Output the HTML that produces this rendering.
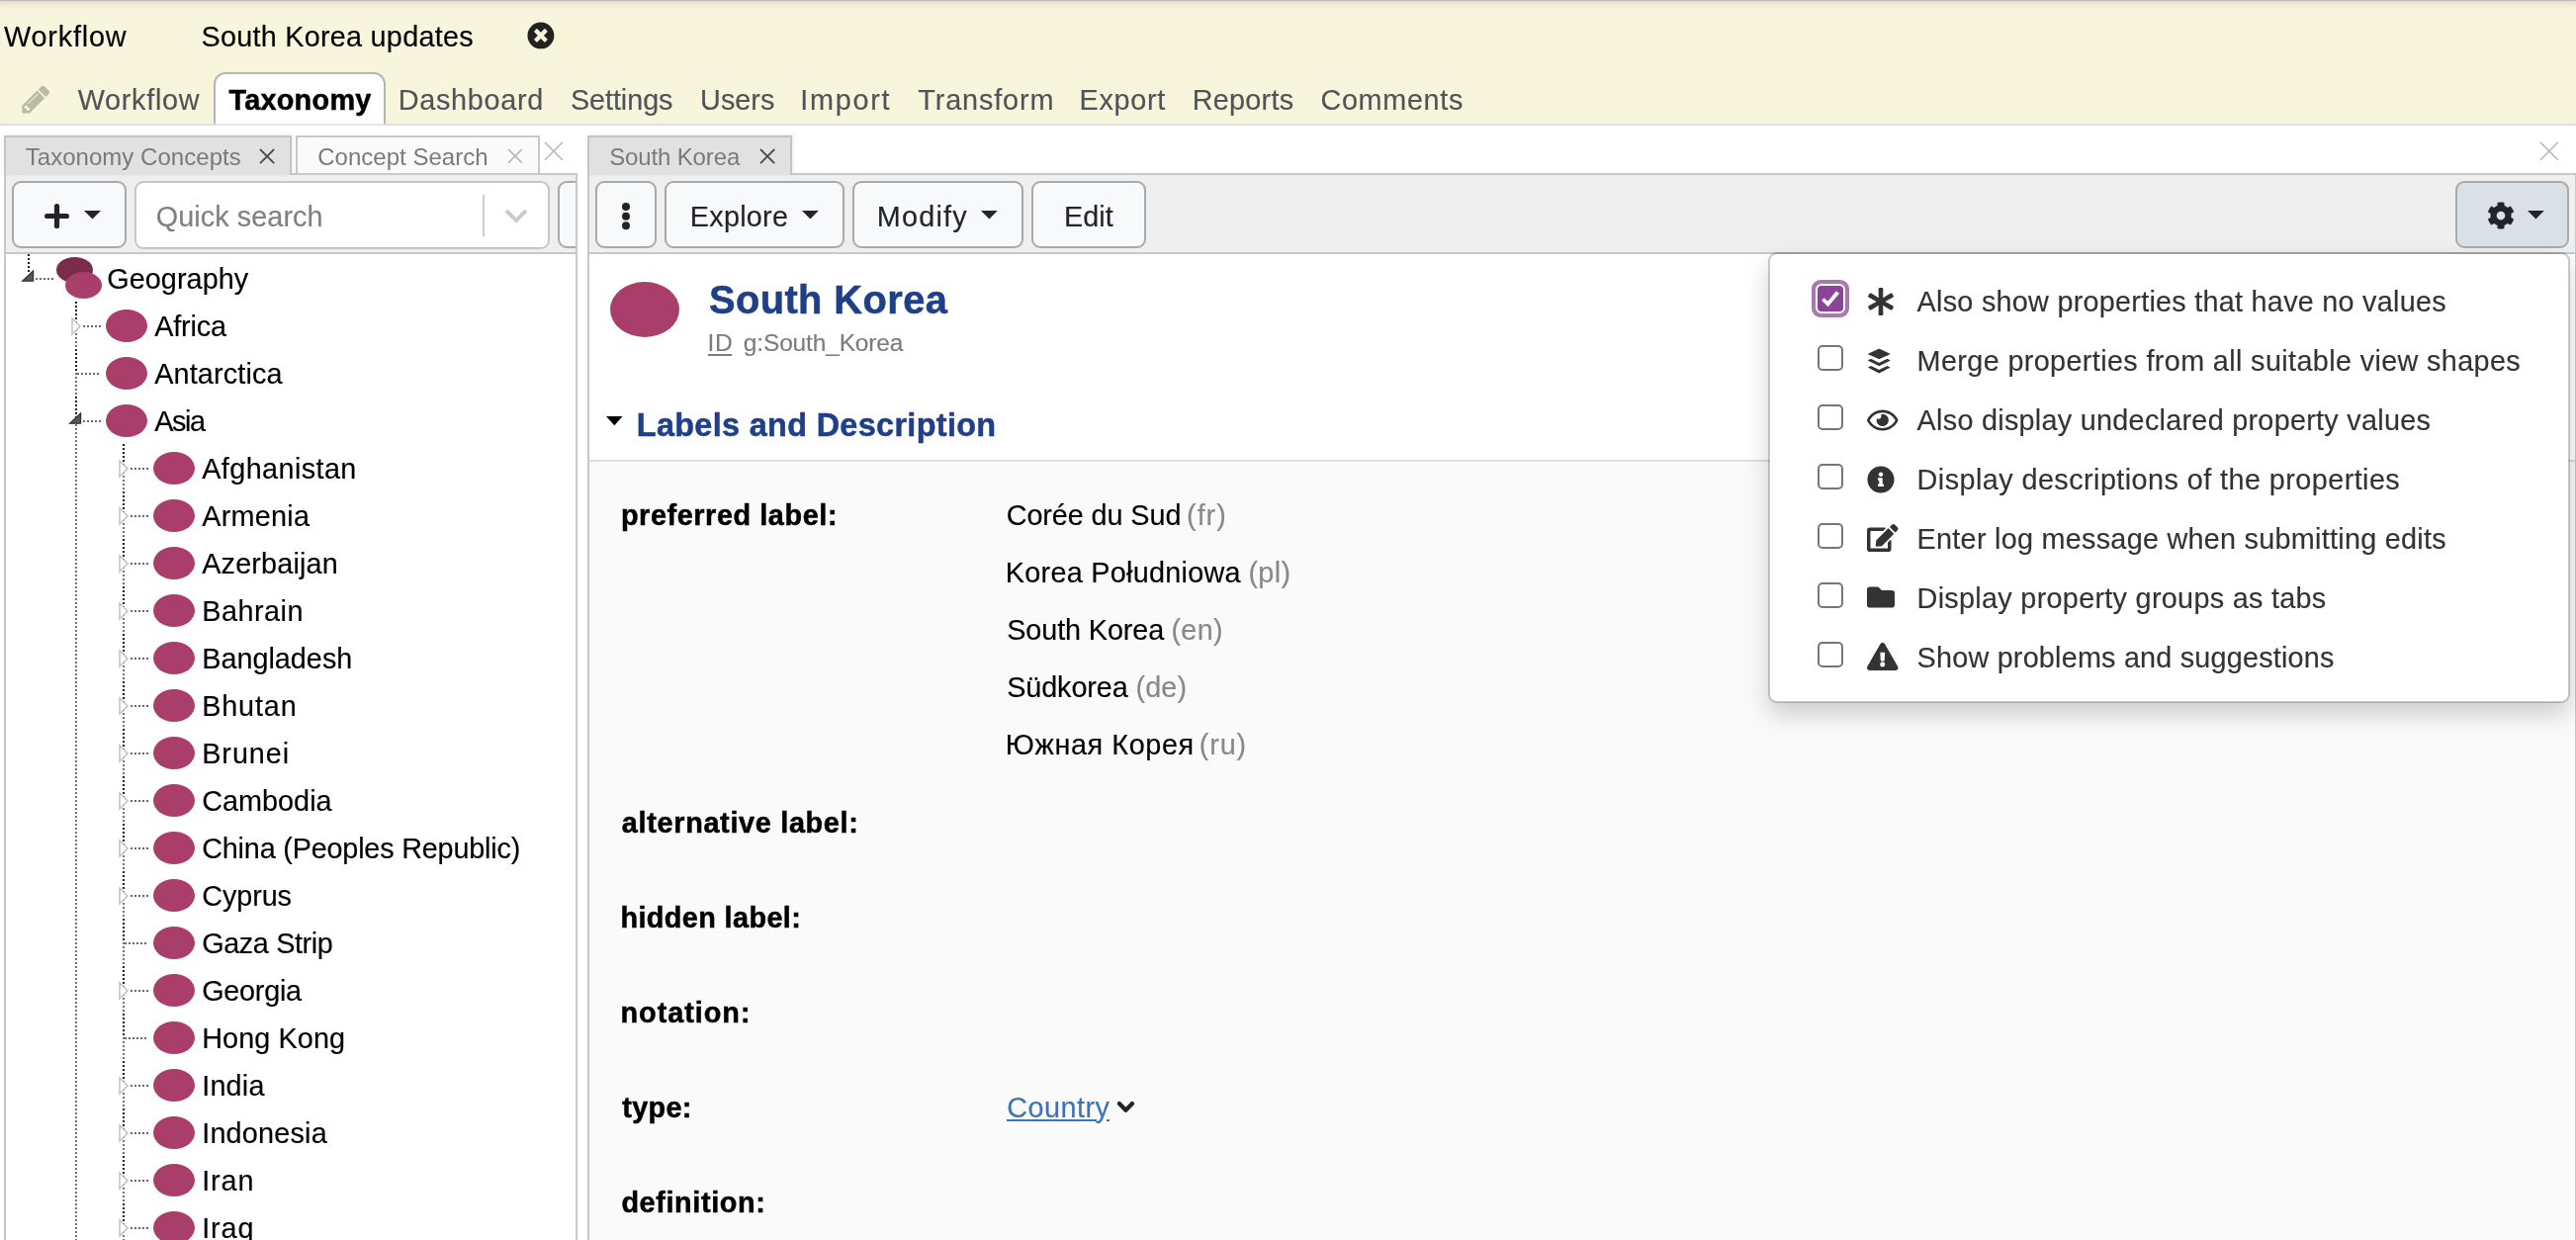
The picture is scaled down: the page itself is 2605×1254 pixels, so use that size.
<!DOCTYPE html>
<html><head><meta charset="utf-8"><title>South Korea</title>
<style>
html,body{margin:0;padding:0;}
body{width:2605px;height:1254px;overflow:hidden;position:relative;background:#fff;
 font-family:"Liberation Sans",sans-serif;}
.t{position:absolute;white-space:pre;}
.a{position:absolute;box-sizing:border-box;}
.btn{position:absolute;box-sizing:border-box;background:#f8f9fa;border:2px solid #a9a9a9;border-radius:9px;}
.el{position:absolute;border-radius:50%;background:#a93e6b;}
.vd{position:absolute;width:2px;background:repeating-linear-gradient(to bottom,#757575 0,#757575 2px,transparent 2px,transparent 4px);}
.vk{position:absolute;width:2px;background:repeating-linear-gradient(to bottom,#222 0,#222 2px,transparent 2px,transparent 4px);}
.hd{position:absolute;height:2px;background:repeating-linear-gradient(to right,#6a6a6a 0,#6a6a6a 2px,transparent 2px,transparent 4px);}
.cb{position:absolute;box-sizing:border-box;width:26px;height:26px;border:2px solid #767676;border-radius:5px;background:#fff;}
svg{position:absolute;overflow:visible;}
#root{position:absolute;left:0;top:0;width:2605px;height:1254px;overflow:hidden;will-change:transform;}
</style></head><body><div id="root">
<div class="a" style="left:0;top:0;width:2605px;height:127px;background:#f7f5dc;border-top:1px solid #b9b9bb;border-bottom:2px solid #dcdfe3;box-shadow:inset 0 7px 6px -4px rgba(90,90,60,.16);"></div>
<span id="t0" class="t" style="left:4.00px;top:21px;font-size:28.8px;line-height:32px;font-weight:400;color:#000;letter-spacing:0.823px;-webkit-text-stroke:0.15px currentColor;">Workflow</span>
<span id="t1" class="t" style="left:203.50px;top:21px;font-size:28.8px;line-height:32px;font-weight:400;color:#000;letter-spacing:0.250px;-webkit-text-stroke:0.15px currentColor;">South Korea updates</span>
<svg style="left:533.3px;top:22.3px" width="27.8" height="27.8" viewBox="0 0 512 512"><path fill="#222" d="M256 8C119 8 8 119 8 256s111 248 248 248 248-111 248-248S393 8 256 8zm121.6 313.1c4.7 4.7 4.7 12.3 0 17L338 377.6c-4.7 4.7-12.3 4.7-17 0L256 312l-65.100 65.600c-4.700 4.700-12.300 4.700-17 0L134.400 338c-4.700-4.700-4.700-12.300 0-17l65.600-65-65.600-65.100c-4.700-4.700-4.700-12.300 0-17l39.600-39.600c4.700-4.700 12.300-4.700 17 0l65 65.700 65.100-65.600c4.700-4.700 12.300-4.700 17 0l39.600 39.600c4.700 4.700 4.700 12.300 0 17L312 256l65.600 65.100z"/></svg>
<svg style="left:19.7px;top:84.3px" width="32.8" height="32.8" viewBox="0 0 1792 1792"><path fill="#bbb9a8" d="M491 1536l91-91-235-235-91 91v107h128v128h107zm523-928q0-22-22-22-10 0-17 7l-542 542q-7 7-7 17 0 22 22 22 10 0 17-7l542-542q7-7 7-17zm-54-192l416 416-832 832h-416v-416zm683 96q0 53-37 90l-166 166-416-416 166-165q36-38 90-38 53 0 91 38l235 234q37 39 37 91z"/></svg>
<div class="a" style="left:216px;top:73px;width:174px;height:52px;background:#fff;border:2px solid #b4b6ba;border-bottom:none;border-radius:12px 12px 0 0;"></div>
<div class="a" style="left:218px;top:125px;width:170px;height:2px;background:#e6e6e6;"></div>
<span id="t2" class="t" style="left:78.70px;top:85px;font-size:28.8px;line-height:32px;font-weight:400;color:#515357;letter-spacing:0.709px;-webkit-text-stroke:0.15px currentColor;">Workflow</span>
<span id="t3" class="t" style="left:231.40px;top:85px;font-size:28.8px;line-height:32px;font-weight:700;color:#000;letter-spacing:0.290px;-webkit-text-stroke:0.5px currentColor;">Taxonomy</span>
<span id="t4" class="t" style="left:402.75px;top:85px;font-size:28.8px;line-height:32px;font-weight:400;color:#515357;letter-spacing:0.697px;-webkit-text-stroke:0.15px currentColor;">Dashboard</span>
<span id="t5" class="t" style="left:576.90px;top:85px;font-size:28.8px;line-height:32px;font-weight:400;color:#515357;letter-spacing:-0.066px;-webkit-text-stroke:0.15px currentColor;">Settings</span>
<span id="t6" class="t" style="left:708.10px;top:85px;font-size:28.8px;line-height:32px;font-weight:400;color:#515357;letter-spacing:0.023px;-webkit-text-stroke:0.15px currentColor;">Users</span>
<span id="t7" class="t" style="left:809.35px;top:85px;font-size:28.8px;line-height:32px;font-weight:400;color:#515357;letter-spacing:1.727px;-webkit-text-stroke:0.15px currentColor;">Import</span>
<span id="t8" class="t" style="left:928.35px;top:85px;font-size:28.8px;line-height:32px;font-weight:400;color:#515357;letter-spacing:0.862px;-webkit-text-stroke:0.15px currentColor;">Transform</span>
<span id="t9" class="t" style="left:1091.55px;top:85px;font-size:28.8px;line-height:32px;font-weight:400;color:#515357;letter-spacing:0.703px;-webkit-text-stroke:0.15px currentColor;">Export</span>
<span id="t10" class="t" style="left:1205.65px;top:85px;font-size:28.8px;line-height:32px;font-weight:400;color:#515357;letter-spacing:0.285px;-webkit-text-stroke:0.15px currentColor;">Reports</span>
<span id="t11" class="t" style="left:1335.45px;top:85px;font-size:28.8px;line-height:32px;font-weight:400;color:#515357;letter-spacing:0.674px;-webkit-text-stroke:0.15px currentColor;">Comments</span>
<div class="a" style="left:299px;top:137px;width:247px;height:39px;background:#fafafa;border:2px solid #c8c8c8;border-bottom:none;"></div>
<span id="t13" class="t" style="left:321.27px;top:145px;font-size:24px;line-height:27px;font-weight:400;color:#7a7a7a;letter-spacing:0.013px;">Concept Search</span>
<svg style="left:514.1px;top:151.1px" width="13.8" height="13.8"><path d="M0 0 L13.8 13.8 M13.8 0 L0 13.8" stroke="#b2b2b2" stroke-width="1.6" fill="none"/></svg>
<svg style="left:551.2px;top:144.1px" width="17.8" height="17.8"><path d="M0 0 L17.8 17.8 M17.8 0 L0 17.8" stroke="#b6b6b6" stroke-width="1.5" fill="none"/></svg>
<div class="a" style="left:4px;top:175px;width:580px;height:82px;background:#efefef;border:2px solid #c8c8c8;"></div>
<div class="a" style="left:4px;top:137px;width:291px;height:40px;background:#e1e1e1;border:2px solid #c4c4c4;border-bottom:none;box-shadow:1px -1px 4px rgba(0,0,0,.09);"></div>
<span id="t12" class="t" style="left:25.73px;top:145px;font-size:24px;line-height:27px;font-weight:400;color:#7a7a7a;letter-spacing:0.036px;">Taxonomy Concepts</span>
<svg style="left:262.9px;top:150.9px" width="14.2" height="14.2"><path d="M0 0 L14.2 14.2 M14.2 0 L0 14.2" stroke="#4a4a4a" stroke-width="1.8" fill="none"/></svg>
<div class="a" style="left:4px;top:257px;width:580px;height:1000px;background:#fff;border-left:2px solid #c8c8c8;border-right:2px solid #c8c8c8;"></div>
<div class="btn" style="left:12px;top:183px;width:116px;height:68px;"></div>
<svg style="left:45px;top:206px" width="25" height="25"><path d="M12.5 2.6 V22.4 M2.6 12.5 H22.4" stroke="#212529" stroke-width="5.2" stroke-linecap="round"/></svg>
<svg style="left:85px;top:213px" width="17" height="8.5"><path d="M0 0 H17 L8.5 8.5 Z" fill="#212529"/></svg>
<div class="a" style="left:136px;top:183px;width:420px;height:69px;background:#fff;border:2px solid #c6c6c6;border-radius:9px;"></div>
<span id="t14" class="t" style="left:157.85px;top:203px;font-size:28.8px;line-height:32px;font-weight:400;color:#808080;letter-spacing:0.055px;-webkit-text-stroke:0.15px currentColor;">Quick search</span>
<div class="a" style="left:488px;top:197px;width:2px;height:42px;background:#ccc;"></div>
<svg style="left:510px;top:211px" width="24" height="14"><path d="M2 2 L12 12 L22 2" stroke="#ccc" stroke-width="4" fill="none"/></svg>
<div class="a" style="left:564px;top:183px;width:18px;height:68px;overflow:hidden;"><div class="btn" style="left:0;top:0;width:60px;height:68px;"></div></div>
<div class="vk" style="left:28px;top:257px;height:18px;"></div>
<div class="vd" style="left:76px;top:305px;height:960px;"></div>
<div class="vd" style="left:124px;top:449px;height:820px;"></div>
<div class="hd" style="left:36px;top:281px;width:19px;"></div>
<svg style="left:21.7px;top:273px" width="13" height="13"><path d="M0.6 11.2 H11.6 V0.8 Z" fill="#55575a" stroke="#333" stroke-width="1.2" stroke-linejoin="miter"/></svg>
<div class="el" style="left:57px;top:260px;width:37px;height:26px;background:#7a2c4d;"></div>
<div class="el" style="left:66px;top:275px;width:37px;height:27px;"></div>
<span id="t15" class="t" style="left:108.20px;top:266px;font-size:28.8px;line-height:32px;font-weight:400;color:#000;letter-spacing:0.069px;-webkit-text-stroke:0.15px currentColor;">Geography</span>
<div class="vk" style="left:76px;top:305px;height:24px;"></div>
<div class="hd" style="left:84px;top:329px;width:18px;"></div>
<svg style="left:72px;top:321px" width="10" height="18"><path d="M1 1 V17 L9 9 Z" fill="#fff" stroke="#c2c2c2" stroke-width="1.5"/></svg>
<div class="el" style="left:107px;top:312.5px;width:42px;height:33px;"></div>
<span id="t16" class="t" style="left:156.20px;top:314px;font-size:28.8px;line-height:32px;font-weight:400;color:#000;letter-spacing:-0.150px;-webkit-text-stroke:0.15px currentColor;">Africa</span>
<div class="vk" style="left:76px;top:353px;height:24px;"></div>
<div class="hd" style="left:78px;top:377px;width:24px;"></div>
<div class="el" style="left:107px;top:360.5px;width:42px;height:33px;"></div>
<span id="t17" class="t" style="left:156.20px;top:362px;font-size:28.8px;line-height:32px;font-weight:400;color:#000;letter-spacing:0.146px;-webkit-text-stroke:0.15px currentColor;">Antarctica</span>
<div class="vk" style="left:76px;top:401px;height:24px;"></div>
<div class="hd" style="left:84px;top:425px;width:18px;"></div>
<svg style="left:69.7px;top:417px" width="13" height="13"><path d="M0.6 11.2 H11.6 V0.8 Z" fill="#55575a" stroke="#333" stroke-width="1.2" stroke-linejoin="miter"/></svg>
<div class="el" style="left:107px;top:408.5px;width:42px;height:33px;"></div>
<span id="t18" class="t" style="left:156.20px;top:410px;font-size:28.8px;line-height:32px;font-weight:400;color:#000;letter-spacing:-1.386px;-webkit-text-stroke:0.15px currentColor;">Asia</span>
<div class="vk" style="left:124px;top:449px;height:24px;"></div>
<div class="hd" style="left:132px;top:473px;width:18px;"></div>
<svg style="left:120px;top:465px" width="10" height="18"><path d="M1 1 V17 L9 9 Z" fill="#fff" stroke="#c2c2c2" stroke-width="1.5"/></svg>
<div class="el" style="left:155px;top:456.5px;width:42px;height:33px;"></div>
<span id="t19" class="t" style="left:204.20px;top:458px;font-size:28.8px;line-height:32px;font-weight:400;color:#000;letter-spacing:0.405px;-webkit-text-stroke:0.15px currentColor;">Afghanistan</span>
<div class="vk" style="left:124px;top:497px;height:24px;"></div>
<div class="hd" style="left:132px;top:521px;width:18px;"></div>
<svg style="left:120px;top:513px" width="10" height="18"><path d="M1 1 V17 L9 9 Z" fill="#fff" stroke="#c2c2c2" stroke-width="1.5"/></svg>
<div class="el" style="left:155px;top:504.5px;width:42px;height:33px;"></div>
<span id="t20" class="t" style="left:204.20px;top:506px;font-size:28.8px;line-height:32px;font-weight:400;color:#000;letter-spacing:0.271px;-webkit-text-stroke:0.15px currentColor;">Armenia</span>
<div class="vk" style="left:124px;top:545px;height:24px;"></div>
<div class="hd" style="left:132px;top:569px;width:18px;"></div>
<svg style="left:120px;top:561px" width="10" height="18"><path d="M1 1 V17 L9 9 Z" fill="#fff" stroke="#c2c2c2" stroke-width="1.5"/></svg>
<div class="el" style="left:155px;top:552.5px;width:42px;height:33px;"></div>
<span id="t21" class="t" style="left:204.20px;top:554px;font-size:28.8px;line-height:32px;font-weight:400;color:#000;letter-spacing:0.170px;-webkit-text-stroke:0.15px currentColor;">Azerbaijan</span>
<div class="vk" style="left:124px;top:593px;height:24px;"></div>
<div class="hd" style="left:132px;top:617px;width:18px;"></div>
<svg style="left:120px;top:609px" width="10" height="18"><path d="M1 1 V17 L9 9 Z" fill="#fff" stroke="#c2c2c2" stroke-width="1.5"/></svg>
<div class="el" style="left:155px;top:600.5px;width:42px;height:33px;"></div>
<span id="t22" class="t" style="left:204.20px;top:602px;font-size:28.8px;line-height:32px;font-weight:400;color:#000;letter-spacing:0.492px;-webkit-text-stroke:0.15px currentColor;">Bahrain</span>
<div class="vk" style="left:124px;top:641px;height:24px;"></div>
<div class="hd" style="left:132px;top:665px;width:18px;"></div>
<svg style="left:120px;top:657px" width="10" height="18"><path d="M1 1 V17 L9 9 Z" fill="#fff" stroke="#c2c2c2" stroke-width="1.5"/></svg>
<div class="el" style="left:155px;top:648.5px;width:42px;height:33px;"></div>
<span id="t23" class="t" style="left:204.20px;top:650px;font-size:28.8px;line-height:32px;font-weight:400;color:#000;letter-spacing:-0.001px;-webkit-text-stroke:0.15px currentColor;">Bangladesh</span>
<div class="vk" style="left:124px;top:689px;height:24px;"></div>
<div class="hd" style="left:132px;top:713px;width:18px;"></div>
<svg style="left:120px;top:705px" width="10" height="18"><path d="M1 1 V17 L9 9 Z" fill="#fff" stroke="#c2c2c2" stroke-width="1.5"/></svg>
<div class="el" style="left:155px;top:696.5px;width:42px;height:33px;"></div>
<span id="t24" class="t" style="left:204.20px;top:698px;font-size:28.8px;line-height:32px;font-weight:400;color:#000;letter-spacing:0.848px;-webkit-text-stroke:0.15px currentColor;">Bhutan</span>
<div class="vk" style="left:124px;top:737px;height:24px;"></div>
<div class="hd" style="left:132px;top:761px;width:18px;"></div>
<svg style="left:120px;top:753px" width="10" height="18"><path d="M1 1 V17 L9 9 Z" fill="#fff" stroke="#c2c2c2" stroke-width="1.5"/></svg>
<div class="el" style="left:155px;top:744.5px;width:42px;height:33px;"></div>
<span id="t25" class="t" style="left:204.20px;top:746px;font-size:28.8px;line-height:32px;font-weight:400;color:#000;letter-spacing:0.950px;-webkit-text-stroke:0.15px currentColor;">Brunei</span>
<div class="vk" style="left:124px;top:785px;height:24px;"></div>
<div class="hd" style="left:132px;top:809px;width:18px;"></div>
<svg style="left:120px;top:801px" width="10" height="18"><path d="M1 1 V17 L9 9 Z" fill="#fff" stroke="#c2c2c2" stroke-width="1.5"/></svg>
<div class="el" style="left:155px;top:792.5px;width:42px;height:33px;"></div>
<span id="t26" class="t" style="left:204.20px;top:794px;font-size:28.8px;line-height:32px;font-weight:400;color:#000;letter-spacing:0.021px;-webkit-text-stroke:0.15px currentColor;">Cambodia</span>
<div class="vk" style="left:124px;top:833px;height:24px;"></div>
<div class="hd" style="left:132px;top:857px;width:18px;"></div>
<svg style="left:120px;top:849px" width="10" height="18"><path d="M1 1 V17 L9 9 Z" fill="#fff" stroke="#c2c2c2" stroke-width="1.5"/></svg>
<div class="el" style="left:155px;top:840.5px;width:42px;height:33px;"></div>
<span id="t27" class="t" style="left:204.20px;top:842px;font-size:28.8px;line-height:32px;font-weight:400;color:#000;letter-spacing:-0.195px;-webkit-text-stroke:0.15px currentColor;">China (Peoples Republic)</span>
<div class="vk" style="left:124px;top:881px;height:24px;"></div>
<div class="hd" style="left:132px;top:905px;width:18px;"></div>
<svg style="left:120px;top:897px" width="10" height="18"><path d="M1 1 V17 L9 9 Z" fill="#fff" stroke="#c2c2c2" stroke-width="1.5"/></svg>
<div class="el" style="left:155px;top:888.5px;width:42px;height:33px;"></div>
<span id="t28" class="t" style="left:204.20px;top:890px;font-size:28.8px;line-height:32px;font-weight:400;color:#000;letter-spacing:-0.085px;-webkit-text-stroke:0.15px currentColor;">Cyprus</span>
<div class="vk" style="left:124px;top:929px;height:24px;"></div>
<div class="hd" style="left:126px;top:953px;width:24px;"></div>
<div class="el" style="left:155px;top:936.5px;width:42px;height:33px;"></div>
<span id="t29" class="t" style="left:204.20px;top:938px;font-size:28.8px;line-height:32px;font-weight:400;color:#000;letter-spacing:-0.376px;-webkit-text-stroke:0.15px currentColor;">Gaza Strip</span>
<div class="vk" style="left:124px;top:977px;height:24px;"></div>
<div class="hd" style="left:132px;top:1001px;width:18px;"></div>
<svg style="left:120px;top:993px" width="10" height="18"><path d="M1 1 V17 L9 9 Z" fill="#fff" stroke="#c2c2c2" stroke-width="1.5"/></svg>
<div class="el" style="left:155px;top:984.5px;width:42px;height:33px;"></div>
<span id="t30" class="t" style="left:204.20px;top:986px;font-size:28.8px;line-height:32px;font-weight:400;color:#000;letter-spacing:-0.257px;-webkit-text-stroke:0.15px currentColor;">Georgia</span>
<div class="vk" style="left:124px;top:1025px;height:24px;"></div>
<div class="hd" style="left:126px;top:1049px;width:24px;"></div>
<div class="el" style="left:155px;top:1032.5px;width:42px;height:33px;"></div>
<span id="t31" class="t" style="left:204.20px;top:1034px;font-size:28.8px;line-height:32px;font-weight:400;color:#000;letter-spacing:0.101px;-webkit-text-stroke:0.15px currentColor;">Hong Kong</span>
<div class="vk" style="left:124px;top:1073px;height:24px;"></div>
<div class="hd" style="left:132px;top:1097px;width:18px;"></div>
<svg style="left:120px;top:1089px" width="10" height="18"><path d="M1 1 V17 L9 9 Z" fill="#fff" stroke="#c2c2c2" stroke-width="1.5"/></svg>
<div class="el" style="left:155px;top:1080.5px;width:42px;height:33px;"></div>
<span id="t32" class="t" style="left:204.20px;top:1082px;font-size:28.8px;line-height:32px;font-weight:400;color:#000;letter-spacing:0.191px;-webkit-text-stroke:0.15px currentColor;">India</span>
<div class="vk" style="left:124px;top:1121px;height:24px;"></div>
<div class="hd" style="left:132px;top:1145px;width:18px;"></div>
<svg style="left:120px;top:1137px" width="10" height="18"><path d="M1 1 V17 L9 9 Z" fill="#fff" stroke="#c2c2c2" stroke-width="1.5"/></svg>
<div class="el" style="left:155px;top:1128.5px;width:42px;height:33px;"></div>
<span id="t33" class="t" style="left:204.20px;top:1130px;font-size:28.8px;line-height:32px;font-weight:400;color:#000;letter-spacing:0.202px;-webkit-text-stroke:0.15px currentColor;">Indonesia</span>
<div class="vk" style="left:124px;top:1169px;height:24px;"></div>
<div class="hd" style="left:132px;top:1193px;width:18px;"></div>
<svg style="left:120px;top:1185px" width="10" height="18"><path d="M1 1 V17 L9 9 Z" fill="#fff" stroke="#c2c2c2" stroke-width="1.5"/></svg>
<div class="el" style="left:155px;top:1176.5px;width:42px;height:33px;"></div>
<span id="t34" class="t" style="left:204.20px;top:1178px;font-size:28.8px;line-height:32px;font-weight:400;color:#000;letter-spacing:0.897px;-webkit-text-stroke:0.15px currentColor;">Iran</span>
<div class="vk" style="left:124px;top:1217px;height:24px;"></div>
<div class="hd" style="left:132px;top:1241px;width:18px;"></div>
<svg style="left:120px;top:1233px" width="10" height="18"><path d="M1 1 V17 L9 9 Z" fill="#fff" stroke="#c2c2c2" stroke-width="1.5"/></svg>
<div class="el" style="left:155px;top:1224.5px;width:42px;height:33px;"></div>
<span id="t35" class="t" style="left:204.20px;top:1226px;font-size:28.8px;line-height:32px;font-weight:400;color:#000;letter-spacing:0.897px;-webkit-text-stroke:0.15px currentColor;">Iraq</span>
<svg style="left:2569.1px;top:144.1px" width="17.8" height="17.8"><path d="M0 0 L17.8 17.8 M17.8 0 L0 17.8" stroke="#b6b6b6" stroke-width="1.5" fill="none"/></svg>
<div class="a" style="left:594px;top:175px;width:2012px;height:82px;background:#efefef;border:2px solid #c8c8c8;"></div>
<div class="a" style="left:594px;top:137px;width:207px;height:40px;background:#e1e1e1;border:2px solid #c4c4c4;border-bottom:none;box-shadow:1px -1px 4px rgba(0,0,0,.09);"></div>
<span id="t36" class="t" style="left:616.15px;top:145px;font-size:24px;line-height:27px;font-weight:400;color:#7a7a7a;letter-spacing:-0.133px;">South Korea</span>
<svg style="left:768.9px;top:150.9px" width="14.2" height="14.2"><path d="M0 0 L14.2 14.2 M14.2 0 L0 14.2" stroke="#4a4a4a" stroke-width="1.8" fill="none"/></svg>
<div class="a" style="left:594px;top:257px;width:2012px;height:1000px;background:#fff;border-left:2px solid #c8c8c8;border-right:2px solid #c8c8c8;"></div>
<div class="a" style="left:596px;top:465px;width:2008px;height:800px;background:#fafafa;border-top:2px solid #dedede;"></div>
<div class="btn" style="left:602px;top:183px;width:62px;height:68px;"></div>
<svg style="left:626.8px;top:204.7px" width="12" height="30"><circle cx="6" cy="4" r="4" fill="#222"/><circle cx="6" cy="13.7" r="4" fill="#222"/><circle cx="6" cy="23.3" r="4" fill="#222"/></svg>
<div class="btn" style="left:672px;top:183px;width:182px;height:68px;"></div>
<span id="t37" class="t" style="left:697.75px;top:203px;font-size:28.8px;line-height:32px;font-weight:400;color:#212529;letter-spacing:0.261px;-webkit-text-stroke:0.15px currentColor;">Explore</span>
<svg style="left:811.3px;top:213px" width="16.8" height="8.6"><path d="M0 0 H16.8 L8.4 8.6 Z" fill="#212529"/></svg>
<div class="btn" style="left:862px;top:183px;width:173px;height:68px;"></div>
<span id="t38" class="t" style="left:886.85px;top:203px;font-size:28.8px;line-height:32px;font-weight:400;color:#212529;letter-spacing:1.185px;-webkit-text-stroke:0.15px currentColor;">Modify</span>
<svg style="left:992px;top:213px" width="16.8" height="8.6"><path d="M0 0 H16.8 L8.4 8.6 Z" fill="#212529"/></svg>
<div class="btn" style="left:1043px;top:183px;width:116px;height:68px;"></div>
<span id="t39" class="t" style="left:1075.95px;top:203px;font-size:28.8px;line-height:32px;font-weight:400;color:#212529;letter-spacing:0.075px;-webkit-text-stroke:0.15px currentColor;">Edit</span>
<div class="btn" style="left:2483px;top:183px;width:115px;height:68px;background:#dbe0e5;border-color:#a9aaac;"></div>
<svg style="left:2515px;top:204px" width="28" height="28" viewBox="0 0 512 512"><path fill="#212529" d="M487.4 315.7l-42.6-24.6c4.3-23.2 4.3-47 0-70.2l42.6-24.6c4.9-2.800 7.100-8.600 5.500-14-11.100-35.600-30-67.800-54.700-94.600-3.800-4.100-10-5.100-14.800-2.300L380.800 110c-17.900-15.400-38.500-27.300-60.800-35.100V25.800c0-5.600-3.900-10.500-9.400-11.700-36.700-8.200-74.300-7.800-109.200 0-5.500 1.200-9.400 6.100-9.400 11.700V75c-22.200 7.900-42.800 19.800-60.800 35.100L88.700 85.500c-4.900-2.800-11-1.900-14.800 2.300-24.700 26.700-43.600 58.900-54.700 94.600-1.700 5.400.6 11.200 5.500 14L67.300 221c-4.300 23.200-4.300 47 0 70.200l-42.600 24.600c-4.900 2.800-7.100 8.600-5.500 14 11.100 35.600 30 67.800 54.700 94.600 3.800 4.100 10 5.100 14.800 2.300l42.600-24.600c17.900 15.400 38.500 27.300 60.800 35.100v49.200c0 5.600 3.900 10.500 9.400 11.700 36.700 8.200 74.300 7.800 109.200 0 5.500-1.200 9.400-6.100 9.400-11.700v-49.200c22.200-7.900 42.800-19.800 60.800-35.100l42.600 24.600c4.900 2.800 11 1.900 14.800-2.300 24.700-26.700 43.600-58.900 54.700-94.600 1.500-5.500-.7-11.300-5.600-14.100zM256 336c-44.100 0-80-35.900-80-80s35.900-80 80-80 80 35.900 80 80-35.900 80-80 80z"/></svg>
<svg style="left:2555.8px;top:212.8px" width="16.8" height="8.6"><path d="M0 0 H16.8 L8.4 8.6 Z" fill="#212529"/></svg>
<div class="el" style="left:617px;top:285px;width:70px;height:56px;"></div>
<span id="t40" class="t" style="left:716.98px;top:281px;font-size:39.8px;line-height:44px;font-weight:700;color:#1f3f88;letter-spacing:0.427px;-webkit-text-stroke:0.5px currentColor;">South Korea</span>
<span id="t41" class="t" style="left:715.49px;top:333px;font-size:24.5px;line-height:27px;font-weight:400;color:#7c7c7c;letter-spacing:0.663px;-webkit-text-stroke:0.15px currentColor;">ID</span>
<div class="a" style="left:716px;top:358.3px;width:24.4px;height:1.8px;background:#7c7c7c;"></div>
<span id="t42" class="t" style="left:751.83px;top:333px;font-size:24.5px;line-height:27px;font-weight:400;color:#7c7c7c;letter-spacing:-0.154px;-webkit-text-stroke:0.15px currentColor;">g:South_Korea</span>
<svg style="left:612.5px;top:421px" width="16.6" height="9.2"><path d="M0 0 H16.6 L8.3 9.2 Z" fill="#000"/></svg>
<span id="t43" class="t" style="left:643.77px;top:412px;font-size:32.4px;line-height:36px;font-weight:700;color:#1f3f88;letter-spacing:0.334px;-webkit-text-stroke:0.5px currentColor;">Labels and Description</span>
<span id="t44" class="t" style="left:627.90px;top:505px;font-size:28.8px;line-height:32px;font-weight:700;color:#000;letter-spacing:0.595px;-webkit-text-stroke:0.5px currentColor;">preferred label:</span>
<span id="t45" class="t" style="left:1017.75px;top:505px;font-size:28.8px;line-height:32px;font-weight:400;color:#000;letter-spacing:-0.096px;-webkit-text-stroke:0.15px currentColor;">Corée du Sud</span>
<span id="t46" class="t" style="left:1200.05px;top:505px;font-size:28.8px;line-height:32px;font-weight:400;color:#888;letter-spacing:0.989px;-webkit-text-stroke:0.15px currentColor;">(fr)</span>
<span id="t47" class="t" style="left:1016.85px;top:563px;font-size:28.8px;line-height:32px;font-weight:400;color:#000;letter-spacing:0.267px;-webkit-text-stroke:0.15px currentColor;">Korea Południowa</span>
<span id="t48" class="t" style="left:1262.45px;top:563px;font-size:28.8px;line-height:32px;font-weight:400;color:#888;letter-spacing:0.315px;-webkit-text-stroke:0.15px currentColor;">(pl)</span>
<span id="t49" class="t" style="left:1018.20px;top:621px;font-size:28.8px;line-height:32px;font-weight:400;color:#000;letter-spacing:-0.100px;-webkit-text-stroke:0.15px currentColor;">South Korea</span>
<span id="t50" class="t" style="left:1184.45px;top:621px;font-size:28.8px;line-height:32px;font-weight:400;color:#888;letter-spacing:0.308px;-webkit-text-stroke:0.15px currentColor;">(en)</span>
<span id="t51" class="t" style="left:1018.20px;top:679px;font-size:28.8px;line-height:32px;font-weight:400;color:#000;letter-spacing:-0.110px;-webkit-text-stroke:0.15px currentColor;">Südkorea</span>
<span id="t52" class="t" style="left:1148.45px;top:679px;font-size:28.8px;line-height:32px;font-weight:400;color:#888;letter-spacing:0.108px;-webkit-text-stroke:0.15px currentColor;">(de)</span>
<span id="t53" class="t" style="left:1016.85px;top:737px;font-size:28.8px;line-height:32px;font-weight:400;color:#000;letter-spacing:0.599px;-webkit-text-stroke:0.15px currentColor;">Южная Корея</span>
<span id="t54" class="t" style="left:1212.75px;top:737px;font-size:28.8px;line-height:32px;font-weight:400;color:#888;letter-spacing:0.884px;-webkit-text-stroke:0.15px currentColor;">(ru)</span>
<span id="t55" class="t" style="left:628.85px;top:816px;font-size:28.8px;line-height:32px;font-weight:700;color:#000;letter-spacing:0.691px;-webkit-text-stroke:0.5px currentColor;">alternative label:</span>
<span id="t56" class="t" style="left:627.50px;top:912px;font-size:28.8px;line-height:32px;font-weight:700;color:#000;letter-spacing:0.390px;-webkit-text-stroke:0.5px currentColor;">hidden label:</span>
<span id="t57" class="t" style="left:627.50px;top:1008px;font-size:28.8px;line-height:32px;font-weight:700;color:#000;letter-spacing:0.979px;-webkit-text-stroke:0.5px currentColor;">notation:</span>
<span id="t58" class="t" style="left:629.30px;top:1104px;font-size:28.8px;line-height:32px;font-weight:700;color:#000;letter-spacing:0.296px;-webkit-text-stroke:0.5px currentColor;">type:</span>
<span id="t59" class="t" style="left:628.40px;top:1200px;font-size:28.8px;line-height:32px;font-weight:700;color:#000;letter-spacing:0.623px;-webkit-text-stroke:0.5px currentColor;">definition:</span>
<span id="t60" class="t" style="left:1018.25px;top:1104px;font-size:28.8px;line-height:32px;font-weight:400;color:#3d74b4;letter-spacing:0.468px;-webkit-text-stroke:0.15px currentColor;">Country</span>
<div class="a" style="left:1018px;top:1132px;width:90.8px;height:2px;background:#3d74b4;"></div>
<div class="a" style="left:1118.8px;top:1132px;width:3.6px;height:2px;background:#3d74b4;"></div>
<svg style="left:1129px;top:1113px" width="19" height="13"><path d="M2.9 3 L9.45 9.7 L16 3" stroke="#222" stroke-width="4.2" stroke-linecap="round" stroke-linejoin="round" fill="none"/></svg>
<div class="a" style="left:1788px;top:255px;width:811px;height:456px;background:#fff;background-clip:padding-box;border:2px solid rgba(0,0,0,.2);border-radius:9px;box-shadow:0 12px 24px rgba(0,0,0,.175);"></div>
<span id="t61" class="t" style="left:1938.60px;top:289px;font-size:28.8px;line-height:32px;font-weight:400;color:#333;letter-spacing:0.256px;-webkit-text-stroke:0.15px currentColor;">Also show properties that have no values</span>
<svg style="left:1887.8px;top:290.7px" width="28.00" height="28" viewBox="0 0 512 512"><path fill="#333" d="M478.21 334.093L336 256l142.21-78.093c11.795-6.477 15.961-21.384 9.232-33.037l-19.48-33.741c-6.728-11.653-21.72-15.499-33.227-8.523L296 186.718l3.475-162.204C299.763 11.061 288.937 0 275.48 0h-38.960c-13.456 0-24.283 11.061-23.994 24.514L216 186.718 77.265 102.607c-11.506-6.976-26.499-3.130-33.227 8.523l-19.480 33.741c-6.728 11.653-2.562 26.560 9.233 33.037L176 256 33.790 334.093c-11.795 6.477-15.961 21.384-9.232 33.037l19.480 33.741c6.728 11.653 21.721 15.499 33.227 8.523L216 325.282l-3.475 162.204C212.237 500.939 223.064 512 236.520 512h38.961c13.456 0 24.283-11.061 23.995-24.514L296 325.282l138.735 84.111c11.506 6.976 26.499 3.130 33.227-8.523l19.480-33.741c6.728-11.653 2.563-26.559-9.232-33.036z"/></svg>
<div class="a" style="left:1832px;top:283.0px;width:38px;height:38px;border-radius:9px;background:#a878b1;"></div>
<div class="a" style="left:1836px;top:287.0px;width:30px;height:30px;border-radius:6px;background:#fff;"></div>
<div class="a" style="left:1838px;top:289.0px;width:26px;height:26px;border-radius:4px;background:#8b4497;"></div>
<svg style="left:1838px;top:289.0px" width="26" height="26"><path d="M5.5 13.5 L10.5 18.5 L20.5 6.5" stroke="#fff" stroke-width="3.8" fill="none"/></svg>
<span id="t62" class="t" style="left:1938.60px;top:349px;font-size:28.8px;line-height:32px;font-weight:400;color:#333;letter-spacing:0.363px;-webkit-text-stroke:0.15px currentColor;">Merge properties from all suitable view shapes</span>
<svg style="left:1887.8px;top:350.6px" width="24.50" height="28" viewBox="0 0 448 512"><path fill="#333" d="M427.84 380.67l-196.5 97.82a18.6 18.6 0 0 1-14.67 0L20.16 380.67c-4-2-4-5.28 0-7.29L67.22 350a18.65 18.65 0 0 1 14.69 0l134.76 67a18.51 18.51 0 0 0 14.67 0l134.76-67a18.62 18.62 0 0 1 14.68 0l47.06 23.43c4.05 1.96 4.05 5.24 0 7.24zm0-136.53l-47.06-23.43a18.62 18.62 0 0 0-14.68 0l-134.76 67.08a18.68 18.68 0 0 1-14.67 0L81.91 220.71a18.65 18.65 0 0 0-14.69 0l-47.06 23.43c-4 2-4 5.29 0 7.31l196.51 97.8a18.6 18.6 0 0 0 14.67 0l196.5-97.8c4.05-2.02 4.05-5.3 0-7.31zM20.16 130.42l196.5 90.29a20.08 20.08 0 0 0 14.67 0l196.51-90.29c4-1.86 4-4.89 0-6.74L231.33 33.4a19.88 19.88 0 0 0-14.67 0l-196.5 90.28c-4.05 1.85-4.05 4.88 0 6.74z"/></svg>
<div class="cb" style="left:1838px;top:349.4px;"></div>
<span id="t63" class="t" style="left:1938.60px;top:409px;font-size:28.8px;line-height:32px;font-weight:400;color:#333;letter-spacing:0.269px;-webkit-text-stroke:0.15px currentColor;">Also display undeclared property values</span>
<svg style="left:1887.8px;top:410.5px" width="31.50" height="28" viewBox="0 0 576 512"><path fill="#333" d="M288 144a110.94 110.94 0 0 0-31.24 5 55.4 55.4 0 0 1 7.24 27 56 56 0 0 1-56 56 55.4 55.4 0 0 1-27-7.24A111.71 111.71 0 1 0 288 144zm284.52 97.4C518.29 135.59 410.93 64 288 64S57.68 135.64 3.48 241.41a32.35 32.35 0 0 0 0 29.19C57.71 376.41 165.07 448 288 448s230.32-71.64 284.52-177.41a32.35 32.35 0 0 0 0-29.19zM288 400c-98.65 0-189.09-55-237.93-144C98.91 167 189.34 112 288 112s189.09 55 237.93 144C477.1 345 386.66 400 288 400z"/></svg>
<div class="cb" style="left:1838px;top:409.3px;"></div>
<span id="t64" class="t" style="left:1938.60px;top:469px;font-size:28.8px;line-height:32px;font-weight:400;color:#333;letter-spacing:0.432px;-webkit-text-stroke:0.15px currentColor;">Display descriptions of the properties</span>
<svg style="left:1887.8px;top:470.5px" width="28.00" height="28" viewBox="0 0 512 512"><path fill="#333" d="M256 8C119.043 8 8 119.083 8 256c0 136.997 111.043 248 248 248s248-111.003 248-248C504 119.083 392.957 8 256 8zm0 110c23.196 0 42 18.804 42 42s-18.804 42-42 42-42-18.804-42-42 18.804-42 42-42zm56 254c0 6.627-5.373 12-12 12h-88c-6.627 0-12-5.373-12-12v-24c0-6.627 5.373-12 12-12h12v-64h-12c-6.627 0-12-5.373-12-12v-24c0-6.627 5.373-12 12-12h64c6.627 0 12 5.373 12 12v100h12c6.627 0 12 5.373 12 12v24z"/></svg>
<div class="cb" style="left:1838px;top:469.3px;"></div>
<span id="t65" class="t" style="left:1938.60px;top:529px;font-size:28.8px;line-height:32px;font-weight:400;color:#333;letter-spacing:0.264px;-webkit-text-stroke:0.15px currentColor;">Enter log message when submitting edits</span>
<svg style="left:1887.8px;top:530.4px" width="31.50" height="28" viewBox="0 0 576 512"><path fill="#333" d="M402.6 83.2l90.2 90.2c3.8 3.8 3.8 10 0 13.8L274.4 405.6l-92.8 10.3c-12.4 1.4-22.9-9.1-21.5-21.5l10.3-92.8L388.8 83.2c3.8-3.8 10-3.8 13.8 0zm162-22.9l-48.8-48.8c-15.2-15.2-39.9-15.2-55.2 0l-35.4 35.4c-3.8 3.8-3.8 10 0 13.8l90.2 90.2c3.8 3.8 10 3.8 13.8 0l35.4-35.4c15.2-15.3 15.2-40 0-55.2zM384 346.2V448H64V128h229.8c3.2 0 6.2-1.3 8.5-3.5l40-40c7.6-7.6 2.2-20.5-8.5-20.5H48C21.5 64 0 85.5 0 112v352c0 26.5 21.5 48 48 48h352c26.5 0 48-21.5 48-48V306.2c0-10.7-12.9-16-20.5-8.5l-40 40c-2.2 2.3-3.5 5.300-3.5 8.500z"/></svg>
<div class="cb" style="left:1838px;top:529.2px;"></div>
<span id="t66" class="t" style="left:1938.60px;top:589px;font-size:28.8px;line-height:32px;font-weight:400;color:#333;letter-spacing:0.290px;-webkit-text-stroke:0.15px currentColor;">Display property groups as tabs</span>
<svg style="left:1887.8px;top:590.3px" width="28.00" height="28" viewBox="0 0 512 512"><path fill="#333" d="M464 128H272l-64-64H48C21.49 64 0 85.49 0 112v288c0 26.51 21.49 48 48 48h416c26.51 0 48-21.49 48-48V176c0-26.51-21.49-48-48-48z"/></svg>
<div class="cb" style="left:1838px;top:589.1px;"></div>
<span id="t67" class="t" style="left:1938.60px;top:649px;font-size:28.8px;line-height:32px;font-weight:400;color:#333;letter-spacing:0.202px;-webkit-text-stroke:0.15px currentColor;">Show problems and suggestions</span>
<svg style="left:1887.8px;top:650.2px" width="31.50" height="28" viewBox="0 0 576 512"><path fill="#333" d="M569.517 440.013C587.975 472.007 564.806 512 527.94 512H48.054c-36.937 0-59.999-40.055-41.577-71.987L246.423 23.985c18.467-32.009 64.72-31.951 83.154 0l239.94 416.028zM288 354c-25.405 0-46 20.595-46 46s20.595 46 46 46 46-20.595 46-46-20.595-46-46-46zm-43.673-165.346l7.418 136c.347 6.364 5.609 11.346 11.982 11.346h48.546c6.373 0 11.635-4.982 11.982-11.346l7.418-136c.375-6.874-5.098-12.654-11.982-12.654h-63.383c-6.884 0-12.356 5.78-11.981 12.654z"/></svg>
<div class="cb" style="left:1838px;top:649.0px;"></div>
</div></body></html>
